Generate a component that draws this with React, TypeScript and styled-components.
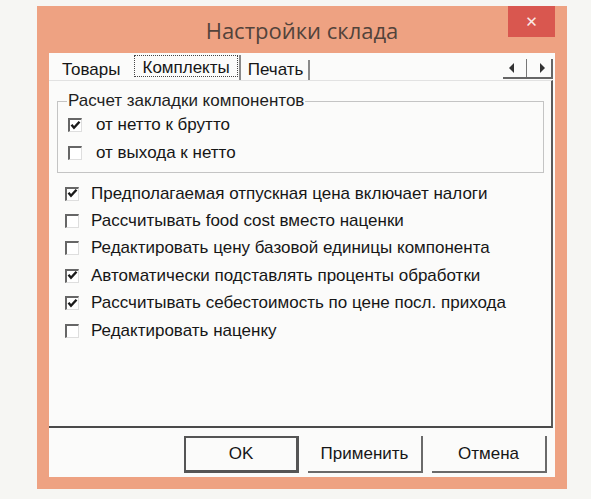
import React from "react"
import styled, { createGlobalStyle } from "styled-components"

const GlobalStyle = createGlobalStyle`
  html, body {
    margin: 0;
    padding: 0;
    background: #f6f6f3;
  }
  body {
    font-family: "Liberation Sans", Arial, sans-serif;
    color: #161616;
  }
`

const groupOptions = [
  { text: "от нетто к брутто", checked: true },
  { text: "от выхода к нетто", checked: false },
]

const options = [
  { text: "Предполагаемая отпускная цена включает налоги", checked: true },
  { text: "Рассчитывать food cost вместо наценки", checked: false },
  { text: "Редактировать цену базовой единицы компонента", checked: false },
  { text: "Автоматически подставлять проценты обработки", checked: true },
  { text: "Рассчитывать себестоимость по цене посл. прихода", checked: true },
  { text: "Редактировать наценку", checked: false },
]

const CheckBox = ({ checked }: { checked: boolean }) => (
  <Box>
    {checked && (
      <svg width="11" height="11" viewBox="0 0 11 11">
        <path d="M1.5 4.8 L4 7.8 L9.5 1.8" fill="none" stroke="#1a1a1a" strokeWidth="2.4" />
      </svg>
    )}
  </Box>
)

const App = () => {
  return (
    <>
      <GlobalStyle />
      <Page>
        <Window>
          <TitleBar>
            <span />
            <Title>Настройки склада</Title>
            <Close>✕</Close>
          </TitleBar>
          <Client>
            <TabRow>
              <Tab>Товары</Tab>
              <ActiveTab>
                <FocusRect>Комплекты</FocusRect>
              </ActiveTab>
              <Tab $edge>Печать</Tab>
              <Scroller>
                <Arrow $dir="left" />
                <ScrollDivider />
                <Arrow $dir="right" />
              </Scroller>
            </TabRow>
            <Panel>
              <Group>
                <Legend>Расчет закладки компонентов</Legend>
                {groupOptions.map((o) => (
                  <GroupRow key={o.text}>
                    <CheckBox checked={o.checked} />
                    <span>{o.text}</span>
                  </GroupRow>
                ))}
              </Group>
              <List>
                {options.map((o) => (
                  <Row key={o.text}>
                    <CheckBox checked={o.checked} />
                    <span>{o.text}</span>
                  </Row>
                ))}
              </List>
            </Panel>
            <Buttons>
              <Button $default>OK</Button>
              <Button>Применить</Button>
              <Button>Отмена</Button>
            </Buttons>
          </Client>
        </Window>
      </Page>
    </>
  )
}

export default App

const Page = styled.div`
  width: 591px;
  height: 499px;
  padding: 6px 0 0 37px;
  box-sizing: border-box;
`

const Window = styled.div`
  width: 530px;
  height: 483px;
  box-sizing: border-box;
  background: #eea282;
  padding: 0 12px 12px 12px;
  display: flex;
  flex-direction: column;
`

const TitleBar = styled.div`
  height: 47px;
  display: grid;
  grid-template-columns: 1fr auto 1fr;
  align-items: start;
`

const Title = styled.div`
  font-family: "Open Sans", "Noto Sans", sans-serif;
  font-size: 22px;
  color: #52433b;
  line-height: 48px;
`

const Close = styled.div`
  justify-self: end;
  width: 47px;
  height: 31px;
  background: #d9574f;
  color: #fbe9e5;
  font-size: 15px;
  font-family: "DejaVu Sans", sans-serif;
  display: flex;
  align-items: center;
  justify-content: center;
`

const Client = styled.div`
  flex: 1;
  background: #fbfbfa;
  display: flex;
  flex-direction: column;
  font-size: 17px;
`

const TabRow = styled.div`
  height: 27px;
  display: flex;
  align-items: flex-end;
  padding-left: 13px;
  margin-right: 2px;
`

const Tab = styled.div<{ $edge?: boolean }>`
  height: 20px;
  line-height: 20px;
  padding-right: ${(p) => (p.$edge ? "5px" : "0")};
  margin-right: 12px;
  border-right: 2px solid ${(p) => (p.$edge ? "#8a8a8a" : "transparent")};
`

const ActiveTab = styled.div`
  height: 25px;
  display: flex;
  align-items: flex-start;
  padding-right: 1px;
  margin-right: 7px;
  border-right: 2px solid #8a8a8a;
`

const FocusRect = styled.div`
  height: 22px;
  box-sizing: border-box;
  padding: 2px 7px 0 7px;
  line-height: 20px;
  border: 1px dotted #444;
`

const Scroller = styled.div`
  margin-left: auto;
  width: 50px;
  height: 20px;
  display: flex;
  align-items: center;
  justify-content: space-around;
  border-bottom: 2px solid #666;
  border-right: 2px solid #666;
  box-sizing: border-box;
  margin-bottom: 1px;
`

const Arrow = styled.span<{ $dir: "left" | "right" }>`
  width: 0;
  height: 0;
  border-top: 5px solid transparent;
  border-bottom: 5px solid transparent;
  ${(p) =>
    p.$dir === "left"
      ? "border-right: 5px solid #333;"
      : "border-left: 5px solid #333;"}
`

const ScrollDivider = styled.span`
  width: 1px;
  height: 18px;
  background: #777;
`

const Panel = styled.div`
  height: 348px;
  box-sizing: border-box;
  margin-right: 2px;
  border-right: 2px solid #5a5a5a;
  border-bottom: 2px solid #4a4a4a;
  border-top: 1px solid #e2e2e2;
  padding: 11px 7px 0 8px;
  display: flex;
  flex-direction: column;
`

const Group = styled.fieldset`
  margin: 0;
  padding: 1px 0 6px 10px;
  border: 1px solid #c4c4c4;
  height: 81px;
  box-sizing: border-box;
  min-width: 0;
`

const Legend = styled.legend`
  padding: 0 1px;
  margin-left: -1px;
  line-height: 18px;
  color: #1e1e1e;
`

const GroupRow = styled.div`
  display: flex;
  align-items: center;
  gap: 14px;
  height: 28px;
`

const List = styled.div`
  padding: 7px 0 0 8px;
  display: flex;
  flex-direction: column;
`

const Row = styled.div`
  display: flex;
  align-items: center;
  gap: 12px;
  height: 27.4px;
`

const Box = styled.span`
  width: 14px;
  height: 14px;
  box-sizing: border-box;
  flex: none;
  background: #fff;
  border-top: 2px solid #666;
  border-left: 2px solid #666;
  border-right: 1px solid #dedede;
  border-bottom: 1px solid #dedede;
  display: flex;
  align-items: center;
  justify-content: center;
  svg {
    margin: -1px 0 0 0;
  }
`

const Buttons = styled.div`
  display: flex;
  justify-content: flex-end;
  gap: 9px;
  padding: 8px 8px 0 0;
`

const Button = styled.div<{ $default?: boolean }>`
  width: 115px;
  height: 37px;
  box-sizing: border-box;
  display: flex;
  align-items: center;
  justify-content: center;
  font-size: 17px;
  color: #161616;
  border-right: 2px solid #6a6a6a;
  border-bottom: 2px solid #6a6a6a;
  ${(p) =>
    p.$default &&
    "border: 2px solid #555; border-right: 3px solid #555; border-bottom: 3px solid #555;"}
`
